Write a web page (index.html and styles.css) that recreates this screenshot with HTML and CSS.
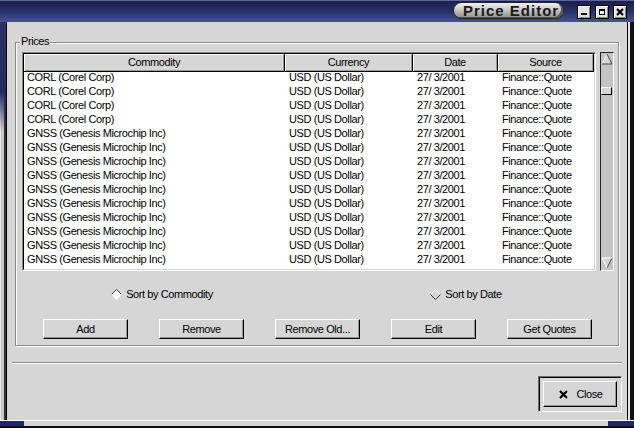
FILE: index.html
```html
<!DOCTYPE html>
<html>
<head>
	<title>Price Editor</title>
	<link rel="stylesheet" href="styles.css">
</head>
<body>
	<div class="window">
		<div class="titlebar">
			<div class="title">Price Editor</div>
			<div class="wm-btn"><svg width="8" height="8" viewBox="0 0 8 8"><rect x="1" y="5" width="6" height="2" fill="#000"/></svg></div>
			<div class="wm-btn"><svg width="8" height="8" viewBox="0 0 8 8"><rect x="1.5" y="1.5" width="5" height="5" fill="#fff" stroke="#000"/><rect x="1" y="1" width="6" height="2" fill="#000"/></svg></div>
			<div class="wm-btn"><svg width="8" height="8" viewBox="0 0 8 8"><path d="M1 1L7 7M7 1L1 7" stroke="#000" stroke-width="2"/></svg></div>
		</div>
		<div class="middle">
			<div class="frame-left"></div>
			<div class="client">
				<div class="group">
					<span class="legend">Prices</span>
					<div class="list-row">
						<div class="list">
							<div class="list-inner">
								<div class="list-head">
									<div class="head c1">Commodity</div>
									<div class="head c2">Currency</div>
									<div class="head c3">Date</div>
									<div class="head c4">Source</div>
								</div>
								<div class="list-body">
									<div class="row"><div class="cell c1">CORL (Corel Corp)</div><div class="cell c2">USD (US Dollar)</div><div class="cell c3">27/ 3/2001</div><div class="cell c4">Finance::Quote</div></div>
									<div class="row"><div class="cell c1">CORL (Corel Corp)</div><div class="cell c2">USD (US Dollar)</div><div class="cell c3">27/ 3/2001</div><div class="cell c4">Finance::Quote</div></div>
									<div class="row"><div class="cell c1">CORL (Corel Corp)</div><div class="cell c2">USD (US Dollar)</div><div class="cell c3">27/ 3/2001</div><div class="cell c4">Finance::Quote</div></div>
									<div class="row"><div class="cell c1">CORL (Corel Corp)</div><div class="cell c2">USD (US Dollar)</div><div class="cell c3">27/ 3/2001</div><div class="cell c4">Finance::Quote</div></div>
									<div class="row"><div class="cell c1">GNSS (Genesis Microchip Inc)</div><div class="cell c2">USD (US Dollar)</div><div class="cell c3">27/ 3/2001</div><div class="cell c4">Finance::Quote</div></div>
									<div class="row"><div class="cell c1">GNSS (Genesis Microchip Inc)</div><div class="cell c2">USD (US Dollar)</div><div class="cell c3">27/ 3/2001</div><div class="cell c4">Finance::Quote</div></div>
									<div class="row"><div class="cell c1">GNSS (Genesis Microchip Inc)</div><div class="cell c2">USD (US Dollar)</div><div class="cell c3">27/ 3/2001</div><div class="cell c4">Finance::Quote</div></div>
									<div class="row"><div class="cell c1">GNSS (Genesis Microchip Inc)</div><div class="cell c2">USD (US Dollar)</div><div class="cell c3">27/ 3/2001</div><div class="cell c4">Finance::Quote</div></div>
									<div class="row"><div class="cell c1">GNSS (Genesis Microchip Inc)</div><div class="cell c2">USD (US Dollar)</div><div class="cell c3">27/ 3/2001</div><div class="cell c4">Finance::Quote</div></div>
									<div class="row"><div class="cell c1">GNSS (Genesis Microchip Inc)</div><div class="cell c2">USD (US Dollar)</div><div class="cell c3">27/ 3/2001</div><div class="cell c4">Finance::Quote</div></div>
									<div class="row"><div class="cell c1">GNSS (Genesis Microchip Inc)</div><div class="cell c2">USD (US Dollar)</div><div class="cell c3">27/ 3/2001</div><div class="cell c4">Finance::Quote</div></div>
									<div class="row"><div class="cell c1">GNSS (Genesis Microchip Inc)</div><div class="cell c2">USD (US Dollar)</div><div class="cell c3">27/ 3/2001</div><div class="cell c4">Finance::Quote</div></div>
									<div class="row"><div class="cell c1">GNSS (Genesis Microchip Inc)</div><div class="cell c2">USD (US Dollar)</div><div class="cell c3">27/ 3/2001</div><div class="cell c4">Finance::Quote</div></div>
									<div class="row"><div class="cell c1">GNSS (Genesis Microchip Inc)</div><div class="cell c2">USD (US Dollar)</div><div class="cell c3">27/ 3/2001</div><div class="cell c4">Finance::Quote</div></div>
									<div class="row"><div class="cell c1">GNSS (Genesis Microchip Inc)</div><div class="cell c2">USD (US Dollar)</div><div class="cell c3">27/ 3/2001</div><div class="cell c4">Finance::Quote</div></div>
								</div>
							</div>
						</div>
						<div class="scrollbar">
							<svg class="arrow" width="12" height="12" viewBox="0 0 12 12"><polygon points="6,1 11,11 1,11" fill="#d6d6d6"/><path d="M1 11L6 1" stroke="#fff"/><path d="M6 1L11 11H1" stroke="#444" fill="none"/></svg>
							<div class="thumb"></div>
							<svg class="arrow down" width="12" height="12" viewBox="0 0 12 12"><polygon points="1,1 11,1 6,11" fill="#d6d6d6"/><path d="M6 11L11 1" stroke="#444"/><path d="M6 11L1 1H11" stroke="#fff" fill="none"/></svg>
						</div>
					</div>
					<div class="radios">
						<div class="radio first">
							<svg width="11" height="11" viewBox="0 0 11 11"><polygon points="5.5,0.5 10.5,5.5 5.5,10.5 0.5,5.5" fill="#fff"/><path d="M0.5 5.5L5.5 0.5L10.5 5.5" stroke="#333" fill="none"/><path d="M0.5 5.5L5.5 10.5L10.5 5.5" stroke="#fff" fill="none"/></svg>
							<span>Sort by Commodity</span>
						</div>
						<div class="radio">
							<svg width="11" height="11" viewBox="0 0 11 11"><polygon points="5.5,0.5 10.5,5.5 5.5,10.5 0.5,5.5" fill="#d6d6d6"/><path d="M0.5 5.5L5.5 0.5L10.5 5.5" stroke="#fff" fill="none"/><path d="M0.5 5.5L5.5 10.5L10.5 5.5" stroke="#333" fill="none"/></svg>
							<span>Sort by Date</span>
						</div>
					</div>
					<div class="buttons">
						<div class="btn">Add</div>
						<div class="btn">Remove</div>
						<div class="btn">Remove Old...</div>
						<div class="btn">Edit</div>
						<div class="btn">Get Quotes</div>
					</div>
				</div>
				<div class="separator"></div>
				<div class="actions">
					<div class="default-frame">
						<div class="btn close-btn">
							<svg width="9" height="9" viewBox="0 0 9 9"><path d="M1 1L8 8M8 1L1 8" stroke="#000" stroke-width="2.2"/></svg>
							<span>Close</span>
						</div>
					</div>
				</div>
			</div>
			<div class="frame-right"></div>
		</div>
		<div class="frame-bottom"></div>
	</div>
</body>
</html>
```

FILE: styles.css
```css
body{
	margin: 0;
	background: #d6d6d6;
	font-family: "Liberation Sans", Arial, sans-serif;
	font-size: 11px;
	letter-spacing: -0.4px;
	color: #000;
}
.window{
	width: 634px;
	height: 428px;
	display: flex;
	flex-direction: column;
	overflow: hidden;
}
/* window manager decoration */
.titlebar{
	height: 22px;
	flex: none;
	box-sizing: border-box;
	display: flex;
	justify-content: flex-end;
	align-items: flex-end;
	padding: 0 7px 3px 0;
	background: linear-gradient(#1a1e48, #28306a 50%, #46538f);
	border-top: 1px solid #5d679c;
}
.title{
	width: 111px;
	height: 17px;
	box-sizing: border-box;
	margin-right: 9px;
	padding-left: 9px;
	border: 1px solid #222;
	border-radius: 9px;
	background: linear-gradient(#f2f2f2, #c8c8c8 45%, #8c8c8c);
	box-shadow: inset -2px -1px #555;
	font-weight: bold;
	font-size: 15px;
	line-height: 15px;
	letter-spacing: 1px;
	color: #1a1a1a;
}
.wm-btn{
	width: 14px;
	height: 14px;
	box-sizing: border-box;
	margin-left: 4px;
	border: 1px solid #000;
	background: #e2e2e2;
	box-shadow: inset 1px 1px #fff, inset -1px -1px #8a8a8a;
	display: flex;
	align-items: center;
	justify-content: center;
}
.wm-btn:first-of-type{
	margin-left: 0;
}
.middle{
	flex: 1;
	display: flex;
}
.frame-left{
	width: 6px;
	background:
		linear-gradient(#2a3268, #232a60 70px, rgba(35,42,96,0) 110px),
		linear-gradient(to right, #e8e8e8 1px, #c8c8c8 1px, #c8c8c8 4px, #333 4px);
}
.frame-right{
	width: 6px;
	background: linear-gradient(to right, #e4e4e4 2px, #111 2px);
}
.frame-bottom{
	height: 8px;
	flex: none;
	box-sizing: border-box;
	border-top: 1px solid #fff;
	border-bottom: 2px solid #111;
	background: linear-gradient(to right, #232a60 24px, #d6d6d6 24px, #d6d6d6 608px, #232a60 608px);
}
/* dialog contents */
.client{
	flex: 1;
	border-left: 1px solid #000;
	border-right: 1px solid #000;
	padding-top: 20px;
	display: flex;
	flex-direction: column;
}
.group{
	position: relative;
	margin: 0 8px;
	padding: 9px 4px 6px 6px;
	border: 1px solid #8c8c8c;
	box-shadow: inset 1px 1px #fff, 1px 1px #fff;
}
.legend{
	position: absolute;
	top: -8px;
	left: 4px;
	padding: 0 1px;
	background: #d6d6d6;
	line-height: 12px;
}
.list-row{
	display: flex;
	gap: 4px;
	height: 219px;
}
.list{
	width: 574px;
	border: 1px solid;
	border-color: #8c8c8c #fff #fff #8c8c8c;
	box-sizing: border-box;
}
.list-inner{
	height: 100%;
	box-sizing: border-box;
	border: 1px solid;
	border-color: #000 #d6d6d6 #d6d6d6 #000;
	background: #fff;
	display: flex;
	flex-direction: column;
	overflow: hidden;
}
.list-head{
	display: flex;
	flex: none;
}
.head{
	height: 18px;
	box-sizing: border-box;
	background: #d6d6d6;
	border-right: 1px solid #000;
	border-bottom: 1px solid #000;
	box-shadow: inset 1px 1px #fff, inset -1px -1px #9a9a9a;
	text-align: center;
	line-height: 17px;
}
.c1{ width: 261px; }
.c2{ width: 128px; }
.c3{ width: 85px; }
.c4{ flex: 1; }
.list-body{
	flex: 1;
	overflow: hidden;
}
.row{
	display: flex;
	height: 14px;
	line-height: 11px;
	white-space: nowrap;
}
.cell{
	box-sizing: border-box;
	padding-left: 3px;
	overflow: hidden;
}
.cell.c2, .cell.c3, .cell.c4{
	padding-left: 4px;
}
.scrollbar{
	width: 14px;
	box-sizing: border-box;
	border: 1px solid;
	border-color: #222 #fff #fff #222;
	background: #c4c4c4;
	display: flex;
	flex-direction: column;
	align-items: flex-start;
}
.arrow{
	display: block;
}
.arrow.down{
	margin-top: auto;
	margin-bottom: 1px;
}
.thumb{
	width: 11px;
	height: 8px;
	box-sizing: border-box;
	margin-top: 22px;
	background: #d6d6d6;
	border: 1px solid;
	border-color: #fff #000 #000 #fff;
}
.radios{
	display: grid;
	grid-template-columns: 1fr 1fr;
	justify-items: center;
	margin-top: 18px;
	height: 11px;
}
.radio{
	display: flex;
	align-items: center;
	gap: 4px;
	line-height: 11px;
}
.radio svg{
	display: block;
}
.radio.first{
	margin-right: 16px;
}
.buttons{
	display: flex;
	gap: 31px;
	margin-top: 19px;
	padding-left: 21px;
}
.btn{
	width: 85px;
	height: 20px;
	box-sizing: border-box;
	border: 1px solid;
	border-color: #fff #000 #000 #fff;
	box-shadow: inset -1px -1px #969696;
	background: #d6d6d6;
	text-align: center;
	line-height: 18px;
}
.separator{
	margin: 16px 5px 0 5px;
	border-top: 1px solid #8c8c8c;
	border-bottom: 1px solid #fff;
}
.actions{
	display: flex;
	justify-content: flex-end;
	margin-top: 12px;
	padding-right: 5px;
}
.default-frame{
	padding: 4px;
	border: 1px solid;
	border-color: #6e6e6e #fff #fff #6e6e6e;
	box-shadow: inset 1px 1px #000;
}
.close-btn{
	width: 74px;
	height: 26px;
	display: flex;
	align-items: center;
	justify-content: center;
	gap: 8px;
	padding-left: 2px;
}
.close-btn svg{
	display: block;
}
```
